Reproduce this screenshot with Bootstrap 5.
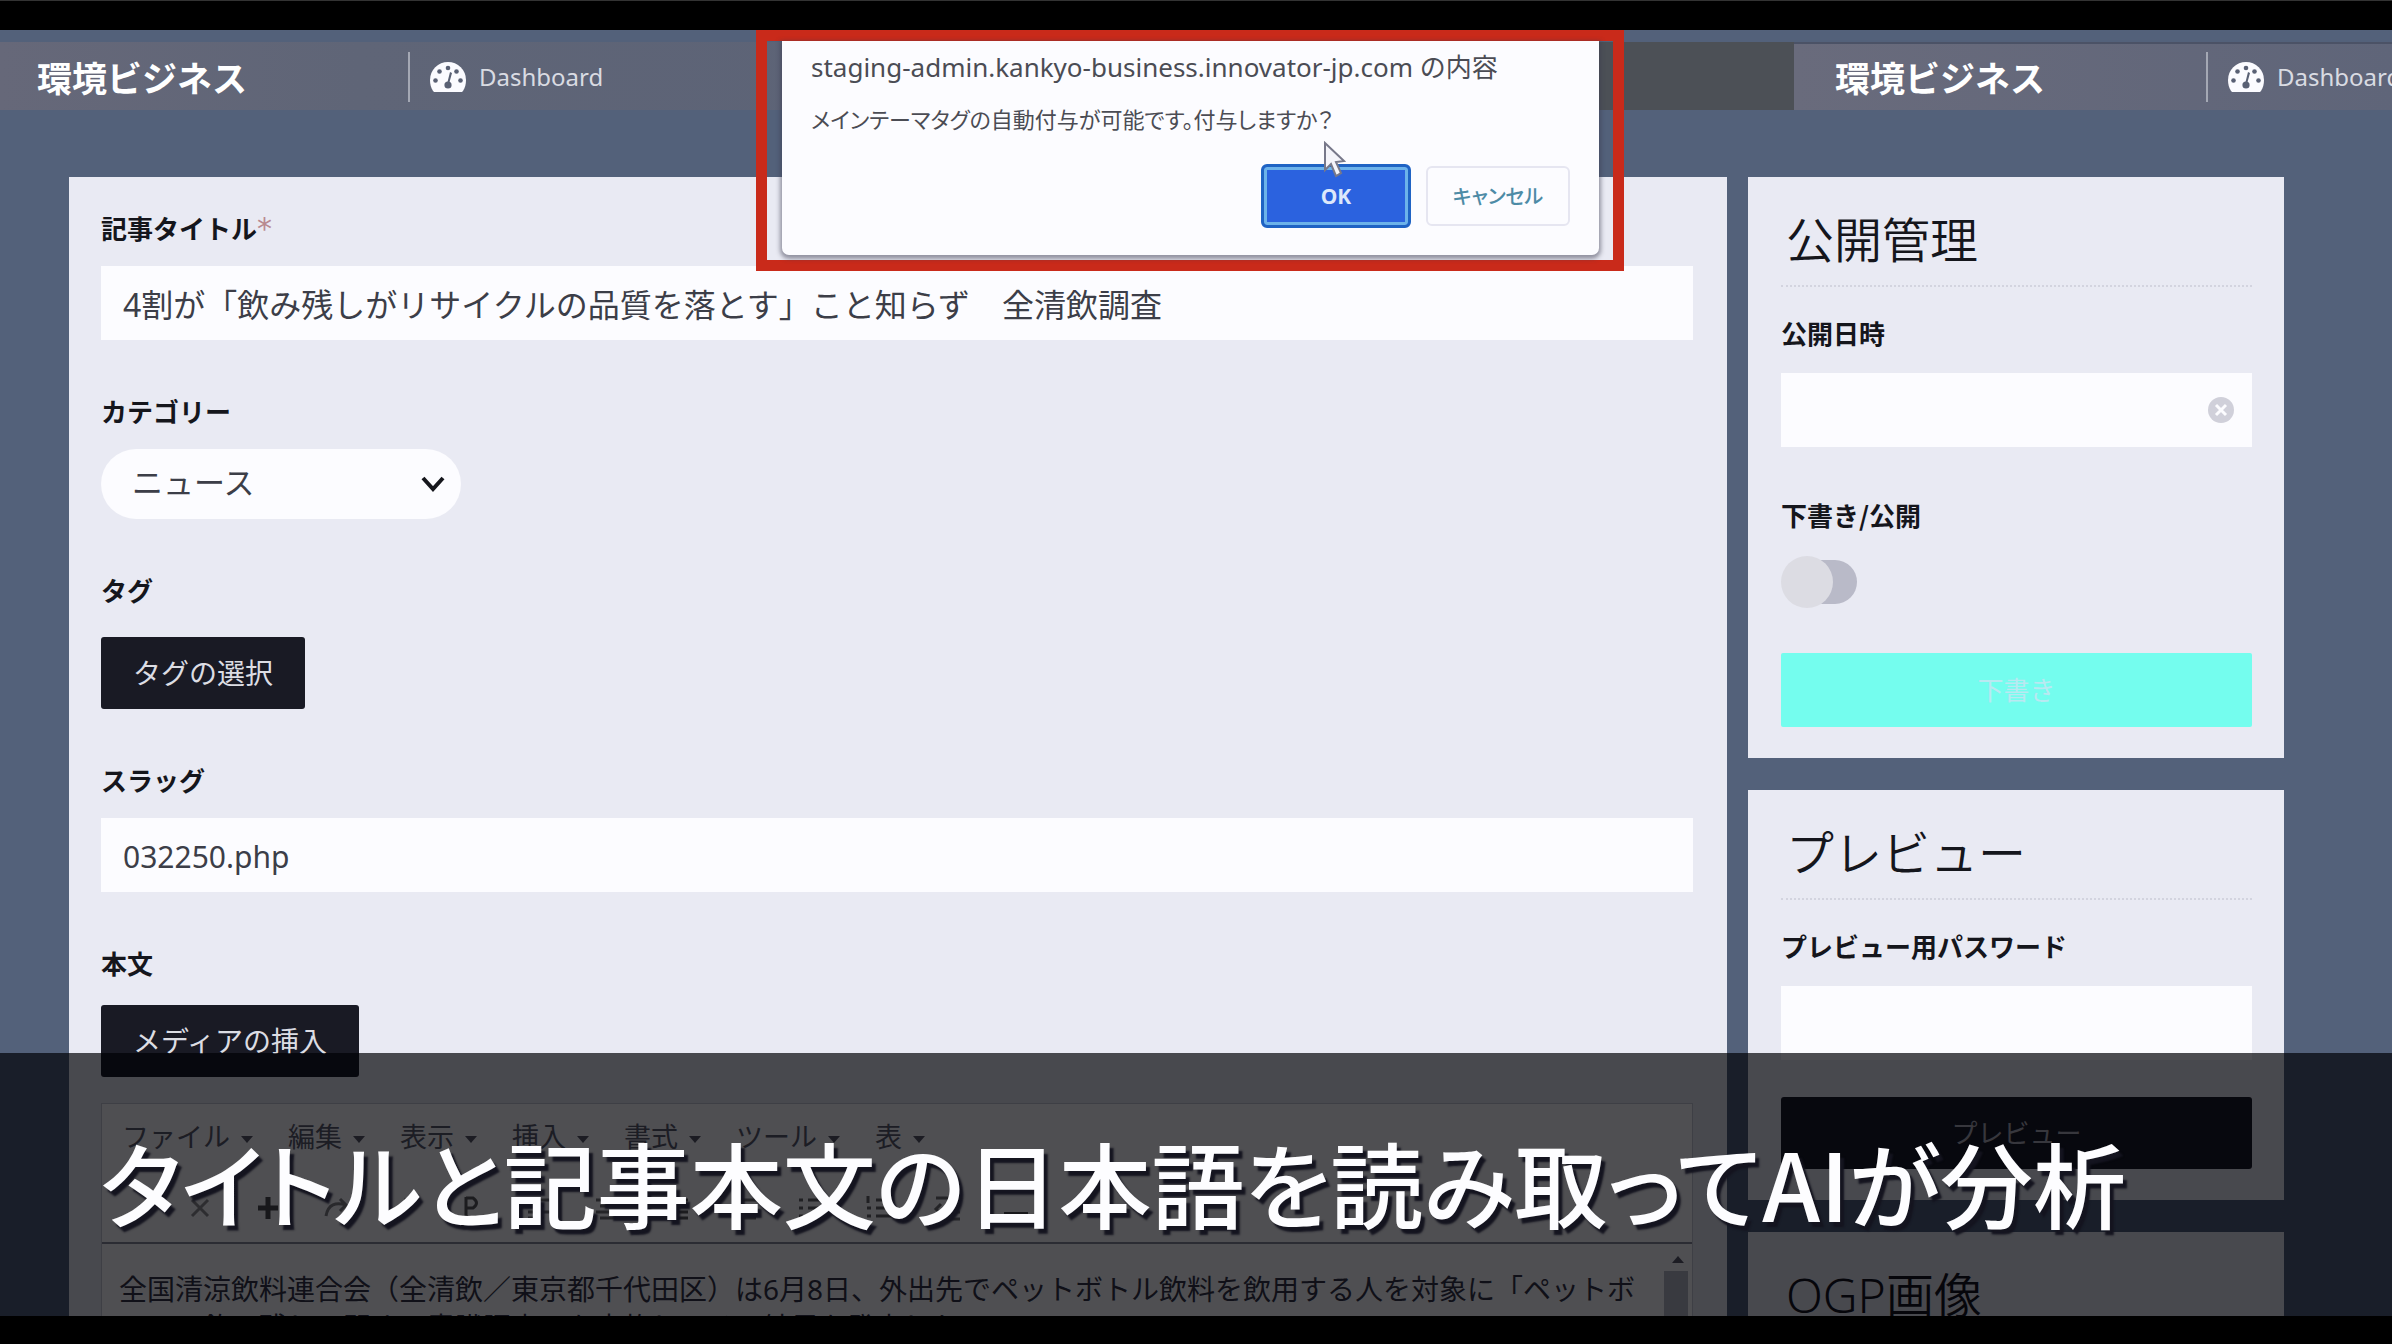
<!DOCTYPE html>
<html lang="ja">
<head>
<meta charset="utf-8">
<meta name="viewport" content="width=device-width, initial-scale=1">
<title>環境ビジネス 記事編集</title>
<link href="https://cdn.jsdelivr.net/npm/bootstrap@5.3.0/dist/css/bootstrap.min.css" rel="stylesheet">
<style>
  :root { --slate:#53617a; --panel:#e9eaf3; --ink:#191a24; --field:#fcfcff; }
  body { font-family:"Noto Sans","Noto Sans CJK JP",sans-serif; background:#000; color:#15161c; height:100vh; overflow:hidden; }
  .film-edge { height:30px; border-top:1px solid #333; }
  .film-foot { height:28px; }
  .stage { background:var(--slate); min-height:0; padding-top:12px; }
  .topbar { height:68px; margin-bottom:67px; color:#fff; }
  .topbar-main { width:75%; padding:2px 0 0 37px; background:linear-gradient(90deg,#666879 0,#5f6577 20%,#5b6276 67%,#4c5056 67%); }
  .topbar-next { padding-left:41px; background:linear-gradient(90deg,#696b7c,#5f6579); border-top:2px solid #4b5266; }
  .brand { width:371px; font-family:"Noto Sans CJK JP",sans-serif; font-size:35px; font-weight:700; color:#fff; text-decoration:none; line-height:50px; }
  .dash-link { border-left:2px solid #a4a8b4; height:50px; padding-left:20px; gap:13px; color:#d9dbe2; font-size:24px; text-decoration:none; }
  .dash-link svg { width:36px; height:30px; flex:none; }
  .workspace { padding-left:69px; padding-right:108px; gap:21px; }
  .sheet { background:var(--panel); }
  .sheet-main { padding:31px 34px 0 32px; height:1300px; }
  .side { width:536px; gap:32px; }
  .side .sheet { padding:33px 32px 31px 33px; }
  .side h2 { font-size:48px; line-height:60px; font-weight:350; padding:0 0 15px 5px; margin:0 0 26px; border-bottom:2px dotted #d3d4df; }
  .field-name { display:block; font-family:"Noto Sans CJK JP",sans-serif; font-size:26px; line-height:40px; font-weight:700; margin-bottom:18px; }
  .side .field-name { margin-bottom:20px; }
  .field-name.roomy { margin-bottom:27px; }
  .field-name.medium { margin-bottom:22px; }
  .req { color:#b98a90; font-family:"DejaVu Sans",sans-serif; font-size:30px; line-height:1; font-weight:400; }
  .field-box { border:0; border-radius:0; background-color:var(--field); height:74px; font-size:32px; line-height:48px; padding:0 22px; color:#3c3e48; }
  .latin-box { font-size:30px; padding-top:2px; }
  .block { margin-bottom:51px; }
  .category { width:360px; height:70px; border:0; border-radius:35px; font-size:31px; padding:0 60px 4px 31px; color:#3c3e48; background-color:var(--field);
    background-image:url("data:image/svg+xml,%3Csvg xmlns='http://www.w3.org/2000/svg' viewBox='0 0 24 16'%3E%3Cpath d='M2 2l10 11L22 2' fill='none' stroke='%2315161c' stroke-width='4'/%3E%3C/svg%3E"); background-size:24px 16px; background-position:right 16px center; }
  .dark-btn { background:var(--ink); color:#dcdde3; border:0; border-radius:3px; height:72px; font-size:28px; line-height:40px; padding:0 32px; }
  .wide-btn { font-size:26px; }
  .draft-btn { background:#74fdee; color:#b9e9f1; border:0; border-radius:2px; height:74px; margin-top:44px; font-size:26px; }
  .preview-btn { margin-top:37px; height:72px; color:#b0b1bb; }
  .clear-btn { right:17px; top:23px; border:0; background:none; padding:0; width:28px; height:28px; }
  .clear-btn svg { display:block; }
  .pub-switch { appearance:none; display:block; margin:0; position:relative; width:76px; height:54px; }
  .pub-switch::before { content:""; position:absolute; left:6px; top:5px; width:70px; height:44px; border-radius:22px; background:#b9bac8; }
  .pub-switch::after { content:""; position:absolute; left:0; top:1px; width:52px; height:52px; border-radius:50%; background:#dcdce3; }
  .editor { margin-top:26px; background:#fdfdff; border:1px solid #c9cad6; }
  .menu-line { padding:13px 20px; gap:35px; }
  .menu-line button { border:0; background:none; padding:0; font-size:27px; line-height:40px; color:#5c5d6c; }
  .menu-line svg { width:12px; height:7px; margin-left:11px; vertical-align:middle; }
  .tool-line { height:74px; padding:4px 0 0 82px; gap:36px; border-bottom:2px solid #8c8d9c; }
  .tool-line svg { width:32px; height:32px; opacity:.8; }
  .copy-area { flex:1; border:0; resize:none; height:160px; padding:26px 0 0 17px; background:transparent; font-size:28px; line-height:38px; color:#353644; overflow:hidden; white-space:pre; }
  .scroll-rail { width:28px; padding-top:12px; }
  .scroll-rail i { display:block; width:24px; height:120px; margin-top:8px; background:#b9bac5; }
  .subtitle { left:0; right:0; bottom:0; height:263px; padding:64px 0 0 100px; background:rgba(0,0,4,.69); color:#fdfdff; font-family:"Noto Sans CJK JP",sans-serif; font-weight:500; font-size:93px; line-height:130px; white-space:nowrap; font-feature-settings:"palt"; text-shadow:4px 5px 2px #14141f; }
  .callout { left:756px; top:0; width:868px; height:241px; border:11px solid #c92a1a; padding:0 14px 0 15px; }
  .alert-box { background:var(--field); height:214px; border-radius:0 0 7px 7px; padding:4px 29px 0 29px; box-shadow:0 2px 4px 2px rgba(60,60,80,.5); color:#4b4c54; }
  .alert-host { font-size:26px; line-height:44px; white-space:nowrap; }
  .alert-msg { font-family:"Noto Sans CJK JP",sans-serif; font-feature-settings:"palt"; font-size:22px; line-height:36px; margin-top:11px; }
  .alert-actions { margin-top:28px; gap:15px; }
  .alert-actions button { font-size:21px; border-radius:6px; line-height:30px; }
  .ok-btn { width:150px; height:64px; background:#2b62df; color:#dce8fb; border:3px solid #1f63c4; box-shadow:inset 0 0 0 3px #6cb2ea; font-weight:700; }
  .alert-actions .cancel-btn { width:144px; height:60px; background:transparent; color:#4d8ba6; border:2px solid #e6e6f1; font-family:"Noto Sans CJK JP",sans-serif; font-size:20px; font-weight:500; font-feature-settings:"palt"; }
  .pointer { left:555px; top:100px; width:24px; height:38px; }
</style>
<script src="https://cdn.jsdelivr.net/npm/bootstrap@5.3.0/dist/js/bootstrap.bundle.min.js"></script>
</head>
<body class="d-flex flex-column">
<svg class="d-none">
  <symbol id="gauge" viewBox="0 0 36 30"><path fill="#fbfbff" d="M18 0A18 18 0 0 0 0 18c0 4 1 8 3 11 1 1 1 1 2 1h26c1 0 1 0 2-1 2-3 3-7 3-11A18 18 0 0 0 18 0z"/><g fill="#596074"><circle cx="18" cy="6" r="2.3"/><circle cx="9.500" cy="9.500" r="2.300"/><circle cx="26.500" cy="9.500" r="2.300"/><circle cx="5.500" cy="18.500" r="2.300"/><circle cx="30.500" cy="18.500" r="2.300"/><circle cx="18" cy="23" r="3.600"/><path d="M20 10l2 1-3 11h-2z"/></g></symbol>
  <symbol id="caret" viewBox="0 0 12 7"><path d="M0 0h12L6 7z" fill="#5b5c68"/></symbol>
</svg>
<div class="film-edge flex-shrink-0"></div>
<div class="stage flex-grow-1 position-relative overflow-hidden">
  <header class="topbar d-flex">
    <nav class="topbar-main d-flex align-items-center flex-shrink-0" aria-label="メイン">
      <a class="brand" href="#">環境ビジネス</a>
      <a class="dash-link d-flex align-items-center" href="#"><svg><use href="#gauge"/></svg>Dashboard</a>
    </nav>
    <nav class="topbar-next d-flex align-items-center flex-grow-1 overflow-hidden" aria-label="サブ">
      <a class="brand flex-shrink-0" href="#">環境ビジネス</a>
      <a class="dash-link d-flex align-items-center flex-shrink-0" href="#"><svg><use href="#gauge"/></svg>Dashboard</a>
    </nav>
  </header>

  <main class="workspace d-flex align-items-start">
    <form class="sheet sheet-main flex-grow-1">
      <div class="block">
        <label class="field-name" for="title">記事タイトル<span class="req">*</span></label>
        <input class="form-control field-box" id="title" type="text" value="4割が「飲み残しがリサイクルの品質を落とす」こと知らず　全清飲調査">
      </div>
      <div class="block">
        <label class="field-name" for="category">カテゴリー</label>
        <select class="form-select category" id="category"><option>ニュース</option></select>
      </div>
      <div class="block">
        <label class="field-name roomy" for="tags">タグ</label>
        <button class="btn dark-btn" id="tags" type="button">タグの選択</button>
      </div>
      <div class="block">
        <label class="field-name" for="slug">スラッグ</label>
        <input class="form-control field-box latin-box" id="slug" type="text" value="032250.php">
      </div>
      <div>
        <label class="field-name medium" for="article">本文</label>
        <button class="btn dark-btn" type="button">メディアの挿入</button>
        <div class="editor">
          <div class="menu-line d-flex">
            <button type="button">ファイル<svg><use href="#caret"/></svg></button>
            <button type="button">編集<svg><use href="#caret"/></svg></button>
            <button type="button">表示<svg><use href="#caret"/></svg></button>
            <button type="button">挿入<svg><use href="#caret"/></svg></button>
            <button type="button">書式<svg><use href="#caret"/></svg></button>
            <button type="button">ツール<svg><use href="#caret"/></svg></button>
            <button type="button">表<svg><use href="#caret"/></svg></button>
          </div>
          <div class="tool-line d-flex align-items-center">
            <svg viewBox="0 0 32 32" fill="none" stroke="#777" stroke-width="3"><path d="M8 8l16 16M24 8L8 24"/></svg>
            <svg viewBox="0 0 32 32" fill="none" stroke="#222" stroke-width="5"><path d="M16 5v22M6 16h20"/></svg>
            <svg viewBox="0 0 32 32" fill="none" stroke="#666" stroke-width="3"><path d="M6 24C8 12 16 10 26 13M20 7l6 6-6 6"/></svg>
            <svg viewBox="0 0 32 32" fill="none" stroke="#777" stroke-width="3"><path d="M18 6l-5 20"/></svg>
            <svg viewBox="0 0 32 32" fill="none" stroke="#333" stroke-width="3"><path d="M10 5v22M10 6h7q7 5 0 10h-7"/></svg>
            <svg viewBox="0 0 32 32" fill="none" stroke="#555" stroke-width="3"><path d="M4 8h24M4 14h16M4 20h24M4 26h16"/></svg>
            <svg viewBox="0 0 32 32" fill="none" stroke="#555" stroke-width="3"><path d="M4 8h24M8 14h16M4 20h24M8 26h16"/></svg>
            <svg viewBox="0 0 32 32" fill="none" stroke="#333" stroke-width="3"><path d="M4 8h24M12 14h16M4 20h24M12 26h16"/></svg>
            <svg viewBox="0 0 32 32" fill="none" stroke="#555" stroke-width="3"><path d="M4 8h24M4 14h24M4 20h24M4 26h24"/></svg>
            <svg viewBox="0 0 32 32" fill="none" stroke="#444" stroke-width="3"><path d="M3 8h4M12 8h17M3 16h4M12 16h17M3 24h4M12 24h17"/></svg>
            <svg viewBox="0 0 32 32" fill="none" stroke="#444" stroke-width="3"><path d="M4 4v7M12 8h17M3 16h4M12 16h17M3 24h4M12 24h17"/></svg>
            <svg viewBox="0 0 32 32" fill="none" stroke="#555" stroke-width="3"><path d="M4 6h24M14 13h14M14 20h14M4 27h24M9 12l-5 5 5 5"/></svg>
            <svg viewBox="0 0 32 32"><path d="M4 20h24v8H4z" fill="#222"/></svg>
            <svg viewBox="0 0 32 32" fill="none" stroke="#444" stroke-width="3"><path d="M4 24L16 8l12 16"/></svg>
          </div>
          <div class="d-flex">
            <textarea class="copy-area" id="article" wrap="off">全国清涼飲料連合会（全清飲／東京都千代田区）は6月8日、外出先でペットボトル飲料を飲用する人を対象に「ペットボ
トルの飲み残しに関する意識調査」を実施し、その結果を発表した。</textarea>
            <div class="scroll-rail"><svg class="d-block mx-2" width="12" height="7" viewBox="0 0 12 7"><path d="M6 0l6 7H0z" fill="#5b5c68"/></svg><i></i></div>
          </div>
        </div>
      </div>
    </form>

    <aside class="side d-flex flex-column flex-shrink-0">
      <section class="sheet">
        <h2>公開管理</h2>
        <label class="field-name" for="pubdate">公開日時</label>
        <div class="position-relative mb-5">
          <input class="form-control field-box" id="pubdate" type="text">
          <button class="clear-btn position-absolute" type="button" aria-label="クリア"><svg width="28" height="28" viewBox="0 0 28 28"><circle cx="14" cy="14" r="13" fill="#d0d0da"/><path d="M9 9l10 10M19 9L9 19" stroke="#fcfcff" stroke-width="3"/></svg></button>
        </div>
        <label class="field-name" for="pubstate">下書き/公開</label>
        <input class="pub-switch" id="pubstate" type="checkbox" role="switch">
        <button class="btn draft-btn w-100" type="button">下書き</button>
      </section>
      <section class="sheet">
        <h2>プレビュー</h2>
        <label class="field-name" for="pass">プレビュー用パスワード</label>
        <input class="form-control field-box" id="pass" type="text">
        <button class="btn dark-btn wide-btn preview-btn w-100" type="button">プレビュー</button>
      </section>
      <section class="sheet">
        <h2>OGP画像</h2>
      </section>
    </aside>
  </main>

  <div class="subtitle position-absolute">タイトルと記事本文の日本語を読み取ってAIが分析</div>

  <div class="callout position-absolute">
    <div class="alert-box" role="dialog" aria-labelledby="host">
      <div class="alert-host" id="host">staging-admin.kankyo-business.innovator-jp.com の内容</div>
      <div class="alert-msg">メインテーマタグの自動付与が可能です。付与しますか？</div>
      <div class="alert-actions d-flex justify-content-end align-items-center">
        <button class="ok-btn" type="button">OK</button>
        <button class="cancel-btn" type="button">キャンセル</button>
      </div>
    </div>
    <svg class="pointer position-absolute" viewBox="0 0 24 38"><path d="M3 2v27l6-6 5 12 5-3-5-11 8-1z" fill="#f4f4fa" stroke="#77788a" stroke-width="2"/></svg>
  </div>
</div>
<div class="film-foot flex-shrink-0"></div>
</body>
</html>
